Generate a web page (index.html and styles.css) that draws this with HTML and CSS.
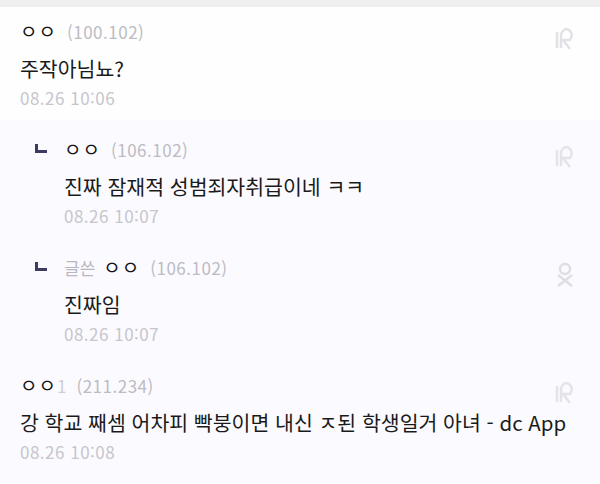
FILE: index.html
```html
<!DOCTYPE html>
<html lang="ko">
<head>
    <meta charset="UTF-8">
    <title>댓글</title>
    <link rel="stylesheet" href="styles.css">
</head>
<body>
    <div class="top-bar"></div>

    <!-- comment list -->
    <ul class="comments">
        <li class="comment">
            <div class="body">
                <div class="meta"><span class="nick">ㅇㅇ</span><span class="ip">(100.102)</span></div>
                <p class="text">주작아님뇨?</p>
                <div class="date">08.26 10:06</div>
            </div>
            <svg class="icon" width="30" height="30" viewBox="0 0 30 30"><path d="M7 25 L7 9 M11 25 L11 11 Q14 4 19 7 Q24 11 20 17 L13 17 L20 26" fill="none" stroke="#e1e1e6" stroke-width="2.5"/></svg>
        </li>
        <li class="comment reply">
            <span class="mark"></span>
            <div class="body">
                <div class="meta"><span class="nick">ㅇㅇ</span><span class="ip">(106.102)</span></div>
                <p class="text">진짜 잠재적 성범죄자취급이네 ㅋㅋ</p>
                <div class="date">08.26 10:07</div>
            </div>
            <svg class="icon" width="30" height="30" viewBox="0 0 30 30"><path d="M7 25 L7 9 M11 25 L11 11 Q14 4 19 7 Q24 11 20 17 L13 17 L20 26" fill="none" stroke="#e3e3e8" stroke-width="2.5"/></svg>
        </li>
        <li class="comment reply">
            <span class="mark"></span>
            <div class="body">
                <div class="meta"><span class="writer">글쓴</span><span class="nick">ㅇㅇ</span><span class="ip">(106.102)</span></div>
                <p class="text">진짜임</p>
                <div class="date">08.26 10:07</div>
            </div>
            <svg class="icon" width="30" height="30" viewBox="0 0 30 30"><circle cx="15" cy="10" r="5" fill="none" stroke="#dedee4" stroke-width="2.5"/><path d="M8 27 L22 16 M8 16 L22 27" stroke="#dedee4" stroke-width="2.5"/></svg>
        </li>
        <li class="comment last">
            <div class="body">
                <div class="meta"><span class="nick">ㅇㅇ</span><span class="fix">1</span><span class="ip">(211.234)</span></div>
                <p class="text">강 학교 째셈 어차피 빡붕이면 내신 ㅈ된 학생일거 아녀 - dc App</p>
                <div class="date">08.26 10:08</div>
            </div>
            <svg class="icon" width="30" height="30" viewBox="0 0 30 30"><path d="M7 25 L7 9 M11 25 L11 11 Q14 4 19 7 Q24 11 20 17 L13 17 L20 26" fill="none" stroke="#e3e3e8" stroke-width="2.5"/></svg>
        </li>
    </ul>
</body>
</html>
```

FILE: styles.css
```css
/* page */
body {
    margin: 0;
    background-color: #fbfaff;
    font-family: "Noto Sans CJK KR", "Noto Sans", sans-serif;
    color: #1e1e1e;
}
.top-bar {
    height: 7px;
    background-color: #efeff0;
}

/* comment rows */
.comments {
    list-style: none;
    margin: 0;
    padding: 0;
}
.comment {
    display: flex;
    align-items: flex-start;
    height: 118px;
    box-sizing: border-box;
    padding: 18px 20px 0 20px;
    background-color: #fefeff;
}
.comment.reply {
    padding-left: 35px;
    background-color: #fbfafe;
}
.comment.last {
    background-color: #fbfaff;
}
.comment:first-child {
    height: 113px;
    padding-top: 13px;
}
.body {
    flex: 1;
    min-width: 0;
    display: flex;
    flex-direction: column;
}

/* reply arrow */
.mark {
    width: 12px;
    height: 9px;
    margin: 6px 17px 0 0;
    border-left: 3px solid #3d3a63;
    border-bottom: 3px solid #3d3a63;
    box-sizing: border-box;
}

.meta {
    display: flex;
    align-items: baseline;
    height: 22px;
    line-height: 22px;
}
.nick {
    font-size: 19px;
    color: #111;
    letter-spacing: 1px;
}
.writer {
    font-size: 17px;
    color: #b9b8c2;
    margin-right: 8px;
}
.fix {
    font-size: 17px;
    color: #cfcfd4;
}
.ip {
    font-size: 17px;
    color: #bcbcc2;
    margin-left: 10px;
    letter-spacing: 0.5px;
}
.text {
    margin: 13px 0 0;
    font-size: 20.5px;
    line-height: 26px;
    color: #1a1a1a;
    white-space: nowrap;
}
.date {
    margin-top: 8px;
    font-size: 17px;
    line-height: 18px;
    color: #c6c6cc;
    letter-spacing: 0.5px;
}
.icon {
    flex: none;
    margin-top: 3px;
}
```
